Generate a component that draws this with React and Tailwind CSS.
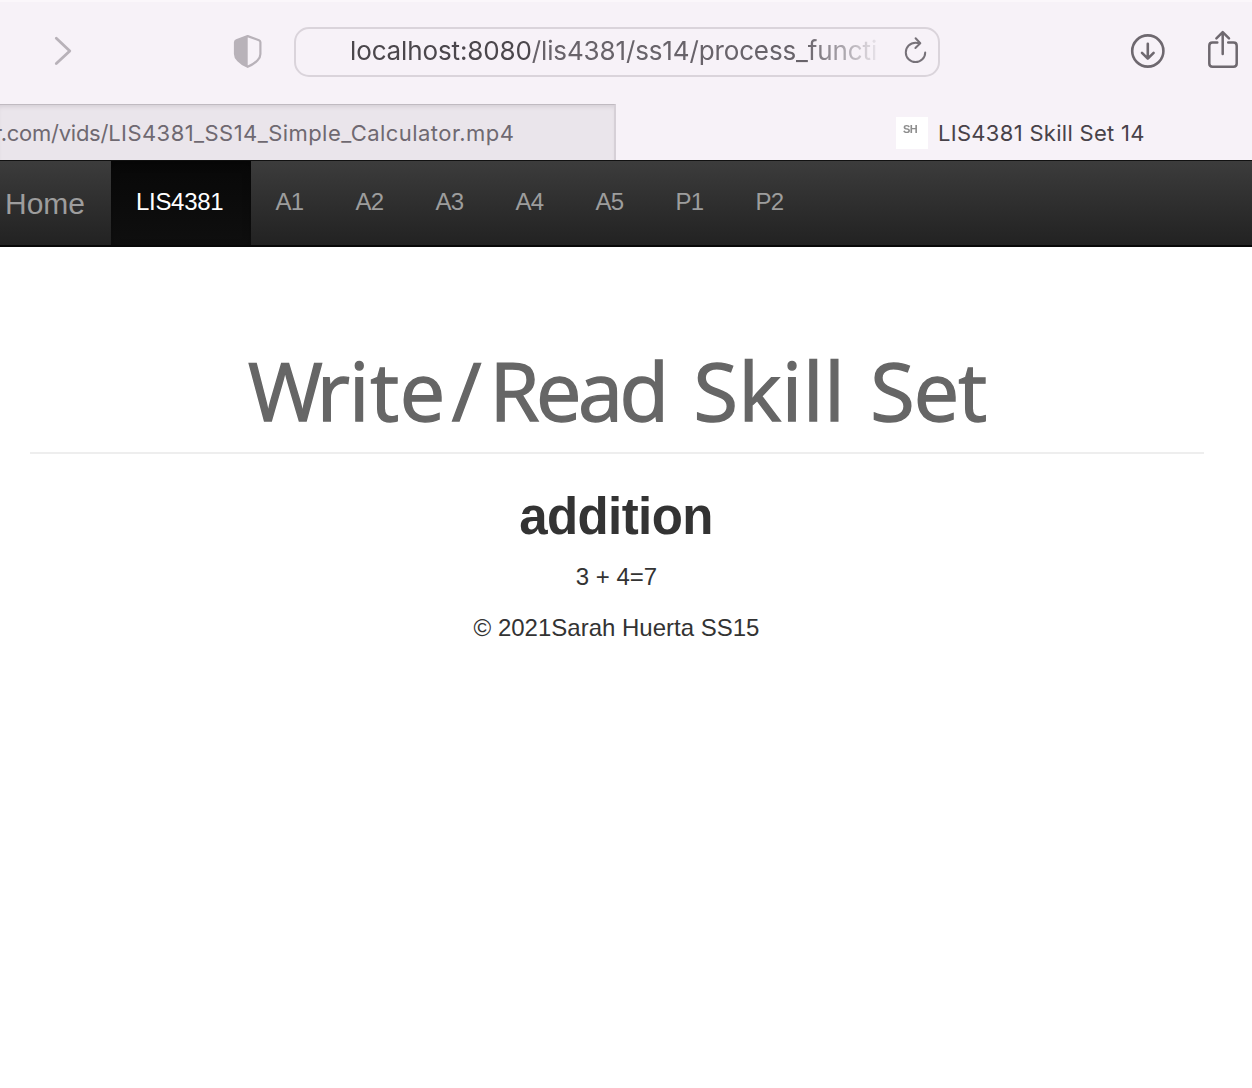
const links = ["A1", "A2", "A3", "A4", "A5", "P1", "P2"];

function Toolbar() {
  return (
    <div className="flex h-[104px] items-start border-t-2 border-[#fbf7fb]">
      <svg className="mt-[33px] ml-[52px] h-8 w-6 shrink-0" viewBox="0 0 24 32" fill="none" stroke="#b8b2b9" strokeWidth="2.8" strokeLinecap="round" strokeLinejoin="round">
        <path d="M4.3 3.2 17.8 15.9 4.3 28.6" />
      </svg>
      <svg className="mt-[31px] ml-[156px] h-9 w-8 shrink-0" viewBox="0 0 32 36">
        <path d="M15.7 3.1 27 7.2Q28.4 7.8 28.4 9.2V21Q28.4 24.5 25.6 27.2 22 31 15.7 33.8 9.4 31 5.9 27.2 3 24.5 3 21V9.2Q3 7.8 4.4 7.2Z" fill="none" stroke="#b8b2b9" strokeWidth="2.2" strokeLinejoin="round" />
        <path d="M15.7 2.5V33.8Q9.4 30.6 5.9 27.2 3 24.5 3 21V9.2Q3 7.8 4.4 7.2Z" fill="#b8b2b9" />
      </svg>
      <div className="mt-[25px] ml-[30px] flex h-[50px] w-[646px] shrink-0 items-center rounded-[15px] border-2 border-[#dad4db]">
        <div className="mb-[2px] ml-[54px] w-[530px] overflow-hidden whitespace-nowrap font-[Inter] text-[26px] leading-[34px] tracking-[-0.13px] text-[#68636a] [mask-image:linear-gradient(to_right,black_86%,transparent_101%)]">
          <span className="text-[#4b474c]">localhost:8080</span>/lis4381/ss14/process_functi
        </div>
        <svg className="mb-[4px] ml-[22px] h-8 w-7 shrink-0" viewBox="0 0 28 32" fill="none" stroke="#777279" strokeWidth="2" strokeLinecap="round" strokeLinejoin="round">
          <path d="M23.2 18.4A9.7 9.7 0 1 1 13.5 8.7Q15.4 8.7 17.6 9.3" />
          <path d="M13.6 4.3 18.3 9.3 13.4 14" />
        </svg>
      </div>
      <svg className="mt-[31px] ml-[190px] h-9 w-9 shrink-0" viewBox="0 0 36 36" fill="none" stroke="#6e686f" strokeWidth="2.6" strokeLinecap="round" strokeLinejoin="round">
        <circle cx="17.8" cy="18" r="15.6" />
        <path d="M17.8 10.8V25.5M12 19.8 17.8 25.6 23.6 19.8" />
      </svg>
      <svg className="mt-[27px] ml-[40px] h-10 w-9 shrink-0" viewBox="0 0 36 40" fill="none" stroke="#6e686f" strokeWidth="2.5" strokeLinecap="round" strokeLinejoin="round">
        <path d="M11.3 13.6H6.5Q3.3 13.6 3.3 16.8V34.5Q3.3 37.7 6.5 37.7H27.5Q30.7 37.7 30.7 34.5V16.8Q30.7 13.6 27.5 13.6H22.2" />
        <path d="M16.7 25V4M10.4 9.4 16.7 3.1 23 9.4" />
      </svg>
    </div>
  );
}

function TabStrip() {
  return (
    <div className="flex h-14 whitespace-nowrap font-[Inter] text-[22px] leading-[54px]">
      <div className="w-[616px] shrink-0 overflow-hidden border-t border-r-2 border-t-[#c0bac1] border-r-[#d6d0d7] bg-[#eae5eb] pt-px text-[#6f6971] shadow-[inset_0_4px_4px_-2px_#d5cfd6]">
        <div className="-ml-[6px] tracking-[0.44px]">
          <span className="tracking-[-0.25px]">r.com/vids/</span>LIS4381_SS14_Simple_Calculator.mp4
        </div>
      </div>
      <div className="flex flex-1 pl-[280px] text-[#484249]">
        <div className="mt-[13px] h-8 w-8 bg-white pt-[7px] pl-[7px] font-['Liberation_Sans'] text-[11px] font-bold leading-[11px] tracking-[-0.5px] text-[#8d8d8d]">
          <div className="blur-[0.5px]">SH</div>
        </div>
        <div className="ml-[10px] pt-[2px] tracking-[0.3px]">LIS4381 Skill Set 14</div>
      </div>
    </div>
  );
}

function NavBar() {
  return (
    <nav className="flex h-[87px] overflow-hidden border-t border-b-2 border-t-[#111] border-b-[#080808] bg-linear-to-b from-[#3c3c3c] to-[#222] text-[24px] leading-[82px] text-[#9d9d9d]">
      <div className="w-[111px] shrink-0 pl-[5px] text-[30px] leading-[86px]">Home</div>
      <div className="w-[140px] shrink-0 bg-linear-to-b from-[#080808] to-[#0f0f0f] pl-[25px] tracking-[-0.3px] text-white shadow-[inset_0_3px_9px_rgba(0,0,0,0.25)]">LIS4381</div>
      {links.map((l) => (
        <div key={l} className="w-20 shrink-0 pl-[24.5px] tracking-[-0.8px]">{l}</div>
      ))}
    </nav>
  );
}

export default function App() {
  return (
    <div className="h-[1088px] w-[1252px] overflow-hidden bg-white font-['Liberation_Sans',sans-serif]">
      <header className="bg-[#f7f2f8]">
        <Toolbar />
        <TabStrip />
      </header>
      <NavBar />
      <main className="ml-[30px] w-[1174px] text-center text-[#333]">
        <h1 className="h-[207px] border-b-2 border-[#eee] pt-[86px] pl-[218px] text-left font-['Open_Sans',sans-serif] text-[81px] leading-[113px] whitespace-nowrap text-[#666] [-webkit-text-stroke:1.4px_#666]">
          <span className="tracking-[-6px]">W</span>
          <span className="tracking-[-1px]">r</span>
          <span className="tracking-[1px]">i</span>
          <span className="tracking-[0.5px]">te</span>
          <span className="ml-[6px] mr-[8px]">/</span>
          <span className="tracking-[-3.5px]">Read</span>
          <span className="ml-[28px] tracking-[0.7px]">Skill</span>
          <span className="ml-[25px] tracking-[-1px]">Set</span>
        </h1>
        <h2 className="mt-[33px] -ml-[2px] text-[51px] font-bold leading-[60px] tracking-[-0.6px]">addition</h2>
        <p className="mt-[12px] -ml-px text-[24px] leading-[36px]">3 + 4=7</p>
        <p className="mt-[15px] -ml-px text-[24px] leading-[36px]">© 2021Sarah Huerta SS15</p>
      </main>
    </div>
  );
}
